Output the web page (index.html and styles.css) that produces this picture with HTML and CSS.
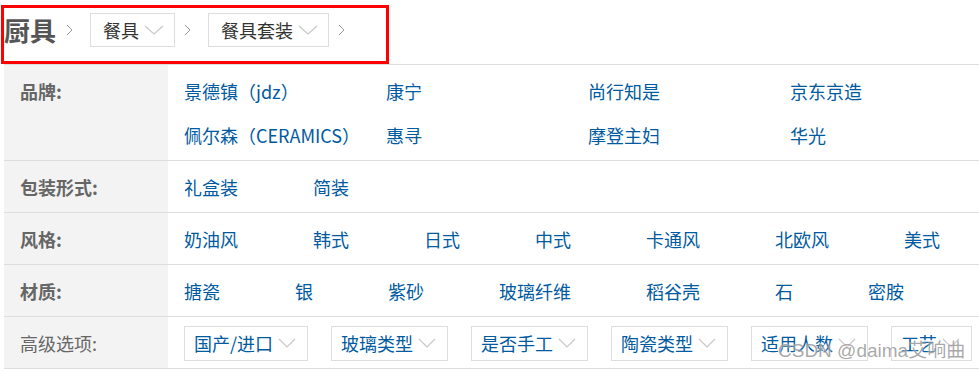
FILE: index.html
```html
<!DOCTYPE html>
<html lang="zh-CN">
<head>
    <meta charset="UTF-8">
    <title>厨具 - 餐具套装</title>
    <link rel="stylesheet" href="styles.css">
</head>
<body>
    <div class="page">
        <div class="crumbs">
            <span class="crumb-root">厨具</span>
            <svg class="sep" width="7" height="12" viewBox="0 0 7 12"><polyline points="1,1 6,6 1,11" fill="none" stroke="#999" stroke-width="1"/></svg>
            <div class="crumb-select">餐具
                <svg class="chev" width="20" height="10" viewBox="0 0 20 10"><polyline points="1,1 10,9 19,1" fill="none" stroke="#c8c8c8" stroke-width="1.2"/></svg>
            </div>
            <svg class="sep" width="7" height="12" viewBox="0 0 7 12"><polyline points="1,1 6,6 1,11" fill="none" stroke="#999" stroke-width="1"/></svg>
            <div class="crumb-select">餐具套装
                <svg class="chev" width="20" height="10" viewBox="0 0 20 10"><polyline points="1,1 10,9 19,1" fill="none" stroke="#c8c8c8" stroke-width="1.2"/></svg>
            </div>
            <svg class="sep" width="7" height="12" viewBox="0 0 7 12"><polyline points="1,1 6,6 1,11" fill="none" stroke="#999" stroke-width="1"/></svg>
        </div>

        <div class="filters">
            <div class="filter-row">
                <div class="filter-label">品牌:</div>
                <ul class="filter-values brands">
                    <li><a href="#">景德镇（jdz）</a></li>
                    <li><a href="#">康宁</a></li>
                    <li><a href="#">尚行知是</a></li>
                    <li><a href="#">京东京造</a></li>
                    <li><a href="#">佩尔森（CERAMICS）</a></li>
                    <li><a href="#">惠寻</a></li>
                    <li><a href="#">摩登主妇</a></li>
                    <li><a href="#">华光</a></li>
                </ul>
            </div>
            <div class="filter-row">
                <div class="filter-label">包装形式:</div>
                <ul class="filter-values">
                    <li><a href="#">礼盒装</a></li>
                    <li><a href="#">简装</a></li>
                </ul>
            </div>
            <div class="filter-row">
                <div class="filter-label">风格:</div>
                <ul class="filter-values">
                    <li><a href="#">奶油风</a></li>
                    <li><a href="#">韩式</a></li>
                    <li><a href="#">日式</a></li>
                    <li><a href="#">中式</a></li>
                    <li><a href="#">卡通风</a></li>
                    <li><a href="#">北欧风</a></li>
                    <li><a href="#">美式</a></li>
                </ul>
            </div>
            <div class="filter-row">
                <div class="filter-label">材质:</div>
                <ul class="filter-values">
                    <li><a href="#">搪瓷</a></li>
                    <li><a href="#">银</a></li>
                    <li><a href="#">紫砂</a></li>
                    <li><a href="#">玻璃纤维</a></li>
                    <li><a href="#">稻谷壳</a></li>
                    <li><a href="#">石</a></li>
                    <li><a href="#">密胺</a></li>
                </ul>
            </div>
            <div class="filter-row">
                <div class="filter-label plain">高级选项:</div>
                <div class="filter-values advanced">
                    <div class="adv-select">国产/进口<svg class="chev" width="18" height="10" viewBox="0 0 18 10"><polyline points="1,1 9,9 17,1" fill="none" stroke="#c8c8c8" stroke-width="1.2"/></svg></div>
                    <div class="adv-select">玻璃类型<svg class="chev" width="18" height="10" viewBox="0 0 18 10"><polyline points="1,1 9,9 17,1" fill="none" stroke="#c8c8c8" stroke-width="1.2"/></svg></div>
                    <div class="adv-select">是否手工<svg class="chev" width="18" height="10" viewBox="0 0 18 10"><polyline points="1,1 9,9 17,1" fill="none" stroke="#c8c8c8" stroke-width="1.2"/></svg></div>
                    <div class="adv-select">陶瓷类型<svg class="chev" width="18" height="10" viewBox="0 0 18 10"><polyline points="1,1 9,9 17,1" fill="none" stroke="#c8c8c8" stroke-width="1.2"/></svg></div>
                    <div class="adv-select">适用人数<svg class="chev" width="18" height="10" viewBox="0 0 18 10"><polyline points="1,1 9,9 17,1" fill="none" stroke="#c8c8c8" stroke-width="1.2"/></svg></div>
                    <div class="adv-select">工艺<svg class="chev" width="18" height="10" viewBox="0 0 18 10"><polyline points="1,1 9,9 17,1" fill="none" stroke="#c8c8c8" stroke-width="1.2"/></svg></div>
                </div>
            </div>
        </div>

        <!-- annotation overlay -->
        <div class="highlight"></div>
        <div class="watermark">CSDN @daima艾响曲</div>
    </div>
</body>
</html>
```

FILE: styles.css
```css
* {
    margin: 0;
    padding: 0;
    box-sizing: border-box;
}

body {
    font-family: "Noto Sans CJK SC", "Liberation Sans", sans-serif;
    font-size: 18px;
    color: #333;
    background: #fff;
    overflow: hidden;
}

a {
    color: #005aa0;
    text-decoration: none;
}

ul {
    list-style: none;
}

.page {
    position: relative;
    width: 1060px;
    padding: 0 0 0 4px;
}

/* breadcrumb */
.crumbs {
    display: flex;
    align-items: center;
    height: 65px;
    padding-bottom: 5px;
    border-bottom: 1px solid #ddd;
}

.crumb-root {
    font-size: 26px;
    font-weight: bold;
    color: #555;
    line-height: 1;
}

.sep {
    margin: 0 17px 0 9px;
}

.crumb-root + .sep {
    margin-left: 10px;
}

.crumb-select {
    display: flex;
    align-items: center;
    height: 34px;
    padding: 0 10px 0 12px;
    border: 1px solid #ddd;
    color: #333;
    line-height: 1;
}

.crumb-select .chev {
    margin-left: 5px;
}

/* filter table */
.filter-row {
    display: flex;
    border-bottom: 1px solid #ddd;
}

.filter-label {
    width: 164px;
    flex-shrink: 0;
    background: #f3f3f3;
    padding: 4px 0 3px 16px;
    line-height: 44px;
    font-weight: bold;
    color: #666;
}

.filter-label.plain {
    font-weight: normal;
}

.filter-values {
    display: flex;
    flex-wrap: wrap;
    flex: 1;
    padding: 4px 0 3px 16px;
    line-height: 44px;
}

.filter-values li {
    margin-right: 75px;
    white-space: nowrap;
}

.brands li {
    width: 202px;
    margin-right: 0;
}

.advanced {
    align-items: center;
    flex-wrap: nowrap;
    gap: 23px;
}

.adv-select {
    display: flex;
    align-items: center;
    flex-shrink: 0;
    height: 35px;
    padding: 0 11px 0 9px;
    border: 1px solid #ddd;
    color: #005aa0;
    line-height: 1;
    white-space: nowrap;
}

.adv-select .chev {
    margin-left: 5px;
}

/* overlays */
.highlight {
    position: absolute;
    left: 1px;
    top: 5px;
    width: 388px;
    height: 59px;
    border: 3px solid #f00;
}

.watermark {
    position: absolute;
    left: 778px;
    top: 339px;
    font-family: "Liberation Sans", "Noto Sans CJK SC", sans-serif;
    font-size: 19px;
    line-height: 24px;
    color: rgba(110, 110, 110, 0.6);
    text-shadow: 0 0 2px #fff;
    white-space: nowrap;
}
```
